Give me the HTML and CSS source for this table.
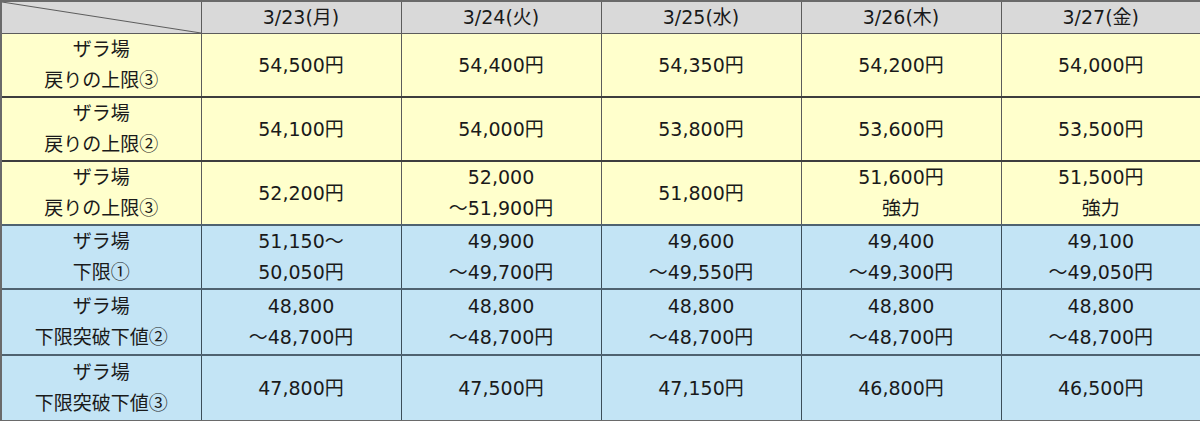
FILE: index.html
```html
<!DOCTYPE html>
<html lang="ja">
<head>
<meta charset="utf-8">
<link rel="stylesheet" href="styles.css">
</head>
<body>
<table class="grid">
  <colgroup><col class="c"><col class="c"><col class="c"><col class="c"><col class="c"><col class="c"></colgroup>
  <thead>
    <tr class="head">
      <th class="diag"></th>
      <th>3/23(月)</th><th>3/24(火)</th><th>3/25(水)</th><th>3/26(木)</th><th>3/27(金)</th>
    </tr>
  </thead>
  <tbody>
    <tr class="y thin">
      <td>ザラ場<br>戻りの上限<span class="cjk">③</span></td>
      <td>54,500円</td><td>54,400円</td><td>54,350円</td><td>54,200円</td><td>54,000円</td>
    </tr>
    <tr class="y">
      <td>ザラ場<br>戻りの上限<span class="cjk">②</span></td>
      <td>54,100円</td><td>54,000円</td><td>53,800円</td><td>53,600円</td><td>53,500円</td>
    </tr>
    <tr class="y">
      <td>ザラ場<br>戻りの上限<span class="cjk">③</span></td>
      <td>52,200円</td><td>52,000<br>～51,900円</td><td>51,800円</td><td>51,600円<br>強力</td><td>51,500円<br>強力</td>
    </tr>
    <tr class="b">
      <td>ザラ場<br>下限<span class="cjk">①</span></td>
      <td>51,150～<br>50,050円</td><td>49,900<br>～49,700円</td><td>49,600<br>～49,550円</td><td>49,400<br>～49,300円</td><td>49,100<br>～49,050円</td>
    </tr>
    <tr class="b tall">
      <td>ザラ場<br>下限突破下値<span class="cjk">②</span></td>
      <td>48,800<br>～48,700円</td><td>48,800<br>～48,700円</td><td>48,800<br>～48,700円</td><td>48,800<br>～48,700円</td><td>48,800<br>～48,700円</td>
    </tr>
    <tr class="b tall">
      <td>ザラ場<br>下限突破下値<span class="cjk">③</span></td>
      <td>47,800円</td><td>47,500円</td><td>47,150円</td><td>46,800円</td><td>46,500円</td>
    </tr>
  </tbody>
</table>
</body>
</html>
```
FILE: styles.css
```css
html, body {
  margin: 0;
  padding: 0;
  background: #ffffff;
}
.grid {
  width: 1200px;
  border-collapse: collapse;
  table-layout: fixed;
  font-family: "DejaVu Sans", "Noto Sans CJK JP", sans-serif;
  font-size: 19px;
  color: #1a1a1a;
}
.cjk {
  font-family: "Noto Sans CJK JP", sans-serif;
  line-height: 0;
}
.c { width: 200px; }
.grid th, .grid td {
  border: 1px solid #5c5c5c;
  text-align: center;
  vertical-align: middle;
  padding: 0;
  line-height: 31px;
  font-weight: normal;
}
.head th {
  background: #d9d9d9;
  height: 31px;
  border-top: 2px solid #6a6a6a;
}
.head th:first-child { border-left: 2px solid #6a6a6a; }
.head th:last-child { border-right: 2px solid #6a6a6a; }
.diag {
  background: linear-gradient(to top right, #d9d9d9 calc(50% - 1px), #5c5c5c 50%, #d9d9d9 calc(50% + 1px)) !important;
}
.y td {
  background: #ffffcc;
  height: 62px;
  border-top: 2px solid #3e3e3e;
}
.y.thin td { border-top: 1px solid #5c5c5c; }
.b td {
  background: #c3e4f5;
  height: 62px;
  border-top: 2px solid #4f6270;
  border-left-color: #3c4e5a;
  border-right-color: #3c4e5a;
}
.b.tall td { height: 64px; }
.grid tr td:first-child { border-left: 2px solid #6a6a6a; }
.grid tr td:last-child { border-right: 2px solid #6a6a6a; }
.grid tbody tr:last-child td { border-bottom: 2px solid #6a6a6a; }
```
